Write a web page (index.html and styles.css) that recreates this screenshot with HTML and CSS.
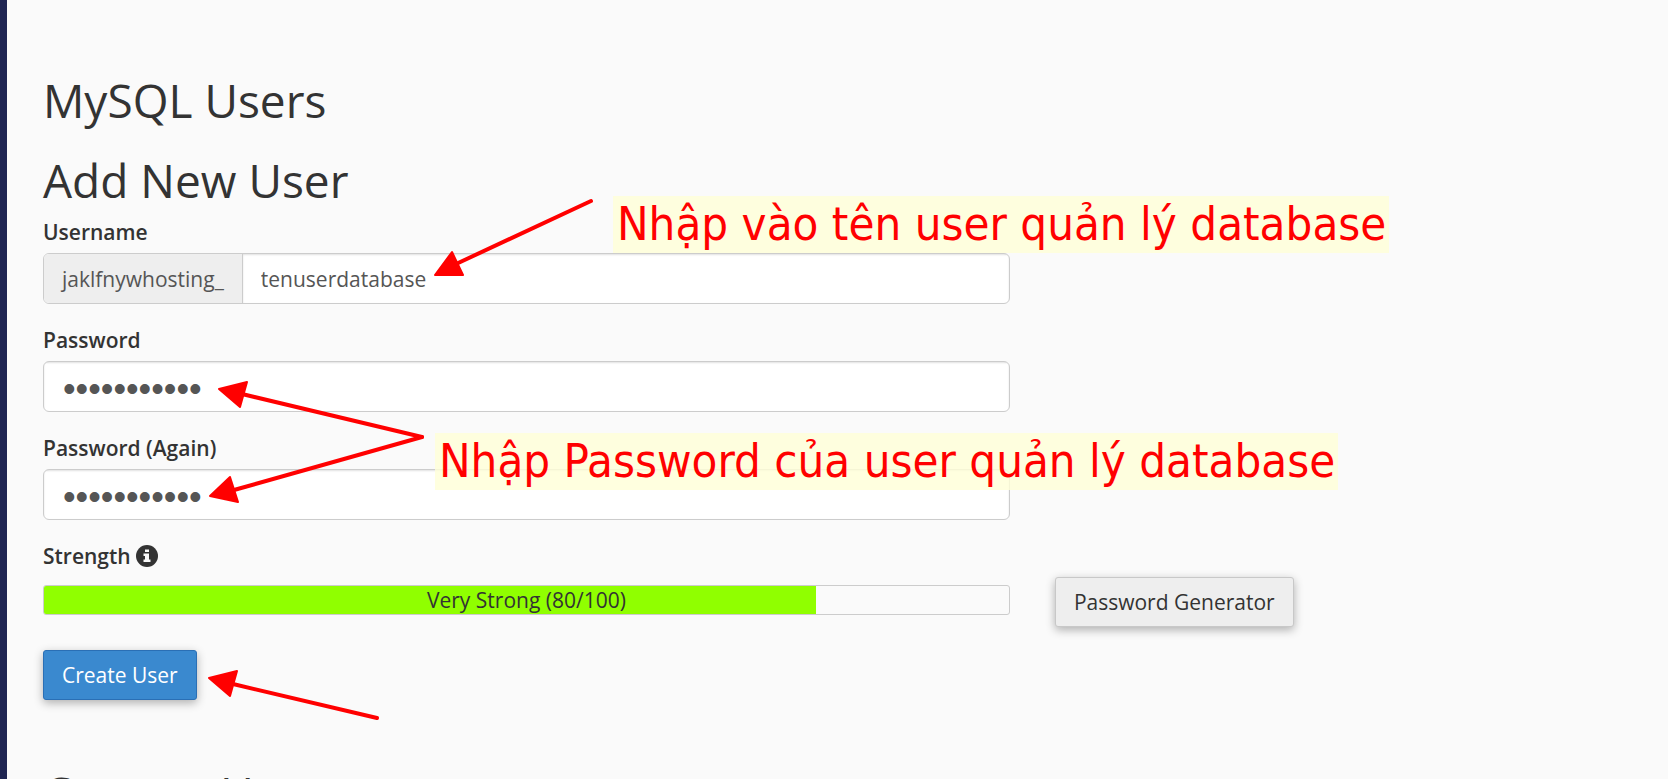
FILE: index.html
```html
<!DOCTYPE html>
<html lang="vi">
<head>
<meta charset="utf-8">
<title>MySQL Users</title>
<meta name="viewport" content="width=device-width, initial-scale=1">
<link rel="stylesheet" href="styles.css">
</head>
<body>
<div class="app">
  <aside class="sidebar"></aside>
  <main class="content">
    <h1 class="heading">MySQL Users</h1>
    <h2 class="heading heading-form">Add New User</h2>
    <form class="user-form">
      <div class="field">
        <label class="label" for="username">Username</label>
        <div class="input-group column">
          <span class="prefix">jaklfnywhosting_</span>
          <input class="input" id="username" type="text" value="tenuserdatabase">
        </div>
      </div>
      <div class="field">
        <label class="label" for="password">Password</label>
        <div class="input-group column">
          <input class="input input-secret" id="password" type="password" value="abcdefghijk">
        </div>
      </div>
      <div class="field">
        <label class="label" for="password-again">Password (Again)</label>
        <div class="input-group column">
          <input class="input input-secret" id="password-again" type="password" value="abcdefghijk">
        </div>
      </div>
      <div class="strength">
        <div class="label">Strength
          <svg class="info" viewBox="0 0 22 22" aria-hidden="true">
            <circle cx="11" cy="11" r="11" fill="#333"/>
            <path fill="#fafafa" d="M9 4.500h4v2.500H9zM7.500 8.500H13v6h1.500v2.500h-7v-2.500H9V11H7.500z"/>
          </svg>
        </div>
        <div class="strength-row">
          <div class="meter column">
            <div class="meter-fill" style="width: 80%"></div>
            <span class="meter-text">Very Strong (80/100)</span>
          </div>
          <button class="button" type="button">Password Generator</button>
        </div>
      </div>
      <button class="button button-primary" type="button">Create User</button>
    </form>
    <h2 class="heading">Current Users</h2>
  </main>
  <svg class="arrows" width="1668" height="779" viewBox="0 0 1668 779" aria-hidden="true">
    <g class="shafts">
      <path d="M591 201L456 264"/>
      <path d="M422 437L242 394"/>
      <path d="M422 437L234 490"/>
      <path d="M377 718L233 684"/>
    </g>
    <g class="heads">
      <path d="M435 275L452 252L463 275Z"/>
      <path d="M219 389L247 382L240 407Z"/>
      <path d="M210 496L230 477L238 502Z"/>
      <path d="M209 678L237 671L230 696Z"/>
    </g>
  </svg>
  <div class="note note-user">Nhập vào tên user quản lý database</div>
  <div class="note note-password">Nhập Password của user quản lý database</div>
</div>
</body>
</html>
```
FILE: styles.css
```css
* {
  box-sizing: border-box;
}

body {
  margin: 0;
  background: #fafafa;
  color: #333;
  font: 21px/30px "Open Sans", "Noto Sans", sans-serif;
}

.app {
  position: relative;
  display: flex;
  height: 100vh;
  overflow: hidden;
}

.sidebar {
  flex: 0 0 7px;
  background: #1f2552;
}

.content {
  flex: 1;
  min-width: 0;
  padding: 75px 0 0 36px;
}

.heading {
  margin: 0 0 30px;
  font-size: 46px;
  line-height: 50px;
  font-weight: 400;
}

.heading-form {
  margin-bottom: 12px;
}

.user-form {
  margin-bottom: 68px;
}

.column {
  width: 59.5%;
}

.field {
  margin-bottom: 21px;
}

.label {
  display: block;
  margin-bottom: 6px;
  font-weight: 600;
}

.input-group {
  display: flex;
  height: 51px;
  border: 1px solid #ccc;
  border-radius: 6px;
  background: #fff;
  overflow: hidden;
}

.prefix {
  padding: 10px 18px 0;
  border-right: 1px solid #ccc;
  background: #eee;
  color: #555;
}

.input {
  flex: 1;
  min-width: 0;
  padding: 0 18px;
  border: 0;
  outline: 0;
  background: transparent;
  box-shadow: inset 0 1px 2px rgba(0, 0, 0, 0.12);
  color: #555;
  font: inherit;
}

.input-secret {
  padding: 4px 19px 0;
  font-family: "Liberation Sans", Arial, sans-serif;
  font-size: 36px;
}

.strength {
  margin-bottom: 23px;
}

.info {
  width: 22px;
  height: 22px;
  vertical-align: -3px;
}

.strength-row {
  display: flex;
  align-items: flex-start;
  gap: 45px;
}

.meter {
  position: relative;
  height: 30px;
  margin-top: 8px;
  border: 1px solid #ccc;
  border-radius: 3px;
  overflow: hidden;
}

.meter-fill {
  height: 100%;
  background: #90ff00;
}

.meter-text {
  position: absolute;
  inset: 0;
  line-height: 28px;
  text-align: center;
}

.button {
  height: 50px;
  padding: 0 18px;
  border: 1px solid #c8c8c8;
  border-radius: 3px;
  background: #eee;
  box-shadow: 0 3px 10px rgba(0, 0, 0, 0.3);
  color: #333;
  font: inherit;
}

.button-primary {
  display: block;
  border-color: #2a6fb5;
  background: #3a89cf;
  color: #fff;
}

.arrows {
  position: absolute;
  top: 0;
  left: 0;
  pointer-events: none;
}

.shafts {
  fill: none;
  stroke: #f00;
  stroke-width: 4;
  stroke-linecap: round;
}

.heads {
  fill: #f00;
  stroke: #f00;
  stroke-width: 2;
  stroke-linejoin: round;
}

.note {
  position: absolute;
  padding: 0 3px 2px 4px;
  background: rgba(255, 255, 215, 0.8);
  color: #f00;
  font: 47px/55px "DejaVu Sans Condensed", "DejaVu Sans", sans-serif;
  white-space: nowrap;
}

.note-user {
  top: 196px;
  left: 613px;
}

.note-password {
  top: 433px;
  left: 435px;
}
```
